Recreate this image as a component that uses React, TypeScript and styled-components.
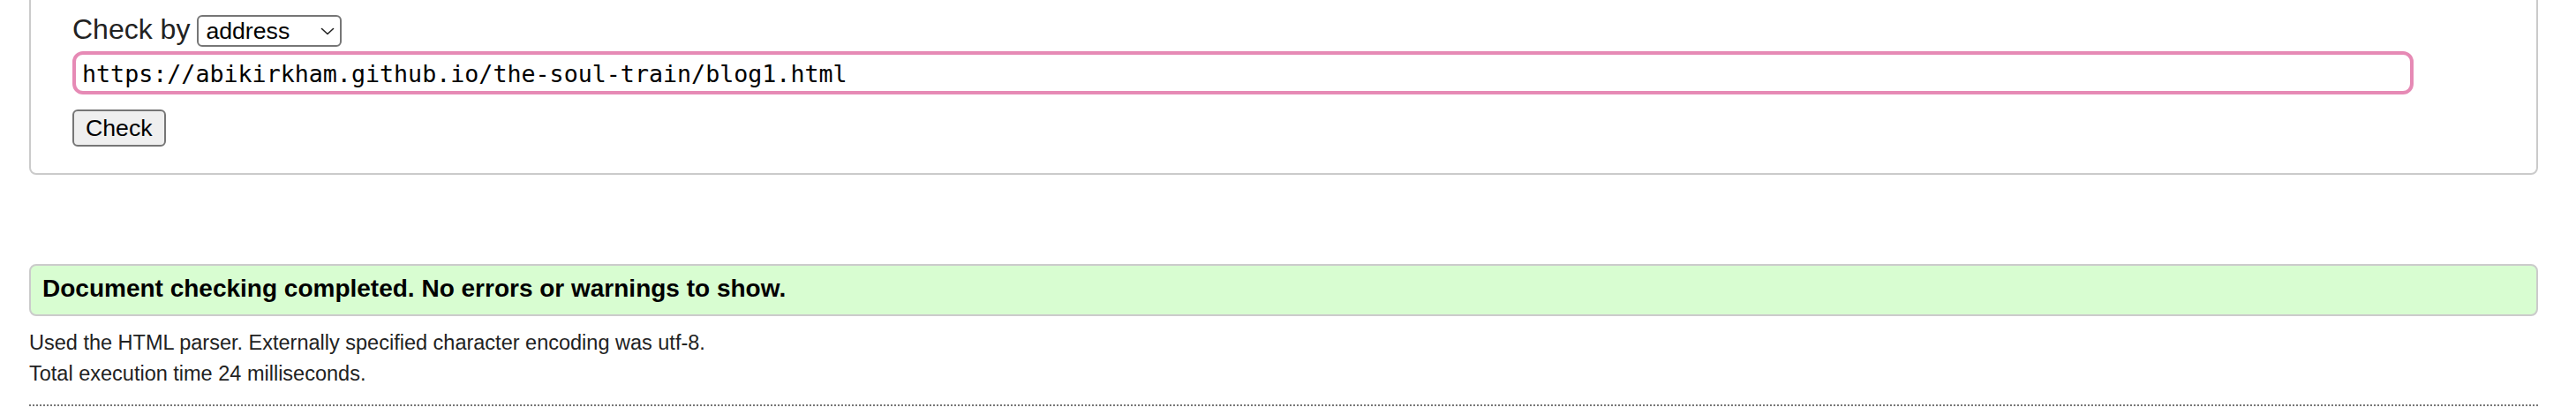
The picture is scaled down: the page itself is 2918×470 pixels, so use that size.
import React from "react";
import styled, { createGlobalStyle } from "styled-components";

const GlobalStyle = createGlobalStyle`
  html, body { margin: 0; padding: 0; background: #ffffff; }
  body {
    font-family: "Liberation Sans", Arial, Helvetica, sans-serif;
    color: #222222;
    overflow: hidden;
  }
`;

const Page = styled.main`
  box-sizing: border-box;
  width: 2918px;
  padding: 0 43px 0 33px;
  margin-top: -24px; /* page is scrolled: the fieldset's top edge is out of view */
`;

const Fieldset = styled.section`
  border: 2px solid #cbcbcb;
  border-radius: 8px;
  padding: 39px 47px 30px;
`;

const Row = styled.div`
  display: flex;
  align-items: baseline;
  gap: 8px;
`;

const Label = styled.label`
  font-size: 32px;
  line-height: 32px;
  color: #222222;
`;

const SelectWrap = styled.span`
  position: relative;
  display: inline-flex;
`;

const Select = styled.select`
  appearance: none;
  -webkit-appearance: none;
  box-sizing: border-box;
  width: 164px;
  height: 36px;
  margin: 0;
  padding: 0 0 0 8px;
  border: 2px solid #767676;
  border-radius: 6px;
  background: #ffffff;
  color: #000000;
  font-family: "Liberation Sans", Arial, sans-serif;
  font-size: 26.67px;
  outline: none;
`;

const Chevron = styled.svg`
  position: absolute;
  right: 8px;
  top: 14px;
  pointer-events: none;
`;

const UrlInput = styled.input`
  display: block;
  box-sizing: border-box;
  width: 2652px;
  height: 49px;
  margin: 5px 0 0;
  padding: 2px 7px 0;
  border: 4px solid #e68ab5;
  border-radius: 12px;
  background: #ffffff;
  color: #000000;
  font-family: "DejaVu Sans Mono", "Liberation Mono", monospace;
  font-size: 26.67px;
  outline: none;
`;

const Button = styled.button`
  display: block;
  box-sizing: border-box;
  height: 42px;
  margin: 17px 0 0;
  padding: 0 13px;
  border: 2px solid #767676;
  border-radius: 6px;
  background: #efefef;
  color: #000000;
  font-family: "Liberation Sans", Arial, sans-serif;
  font-size: 26.67px;
`;

const Success = styled.p`
  margin: 101px 0 0;
  border: 2px solid #cbcbcb;
  border-radius: 8px;
  background: #d8fdd1;
  padding: 10px 13px 13px;
  font-weight: bold;
  font-size: 28px;
  line-height: 32px;
  color: #000000;
`;

const Info = styled.div`
  margin-top: 13px;
`;

const InfoLine = styled.p`
  margin: 0;
  font-size: 23.5px;
  line-height: 35px;
  color: #222222;
`;

const Rule = styled.hr`
  margin: 17px 0 0;
  height: 0;
  border: 0;
  border-top: 2px dotted #777777;
`;

export default function App() {
  return (
    <>
      <GlobalStyle />
      <Page>
        <Fieldset>
          <Row>
            <Label htmlFor="docselect">Check by</Label>
            <SelectWrap>
              <Select id="docselect" defaultValue="address">
                <option value="address">address</option>
                <option value="file">file upload</option>
                <option value="textarea">text input</option>
              </Select>
              <Chevron width="16" height="9" viewBox="0 0 16 9" aria-hidden="true">
                <polyline
                  points="1.5,1.5 8,7.5 14.5,1.5"
                  fill="none"
                  stroke="#222"
                  strokeWidth="1.6"
                  strokeLinecap="round"
                  strokeLinejoin="round"
                />
              </Chevron>
            </SelectWrap>
          </Row>
          <UrlInput
            type="url"
            defaultValue="https://abikirkham.github.io/the-soul-train/blog1.html"
          />
          <Button type="button">Check</Button>
        </Fieldset>
        <Success>Document checking completed. No errors or warnings to show.</Success>
        <Info>
          <InfoLine>Used the HTML parser. Externally specified character encoding was utf-8.</InfoLine>
          <InfoLine>Total execution time 24 milliseconds.</InfoLine>
        </Info>
        <Rule />
      </Page>
    </>
  );
}
